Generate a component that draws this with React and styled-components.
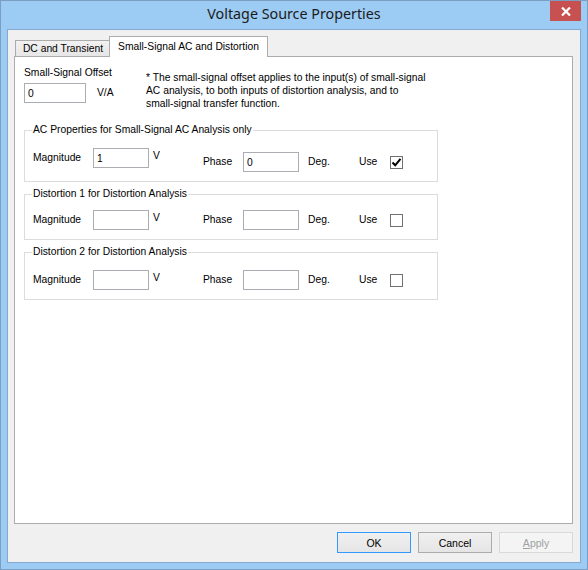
import React from "react";
import styled, { createGlobalStyle } from "styled-components";

const GlobalStyle = createGlobalStyle`
  html, body {
    margin: 0;
    padding: 0;
    background: #ffffff;
  }
  * {
    box-sizing: border-box;
  }
`;

const groups = [
  { title: "AC Properties for Small-Signal AC Analysis only", mag: "1", phase: "0", use: true, padTop: 11, drop: 4 },
  { title: "Distortion 1 for Distortion Analysis", mag: "", phase: "", use: false, padTop: 9, drop: 0 },
  { title: "Distortion 2 for Distortion Analysis", mag: "", phase: "", use: false, padTop: 11, drop: 0 },
];

const App = () => {
  return (
    <>
      <GlobalStyle />
      <Window>
        <TitleBar>
          <span />
          <Title>Voltage Source Properties</Title>
          <CloseButton>
            <svg width="10" height="9" viewBox="0 0 10 9">
              <path d="M1 0.5 L9 8.5 M9 0.5 L1 8.5" stroke="#ffffff" strokeWidth="2.2" />
            </svg>
          </CloseButton>
        </TitleBar>
        <Client>
          <TabStrip>
            <Tab $w={95}>DC and Transient</Tab>
            <Tab $w={159} $active>Small-Signal AC and Distortion</Tab>
          </TabStrip>
          <Panel>
            <TopRow>
              <OffsetBlock>
                <Label>Small-Signal Offset</Label>
                <OffsetLine>
                  <TextBox $w={62} defaultValue="0" />
                  <Unit>V/A</Unit>
                </OffsetLine>
              </OffsetBlock>
              <Note>
                * The small-signal offset applies to the input(s) of small-signal
                <br />
                AC analysis, to both inputs of distortion analysis, and to
                <br />
                small-signal transfer function.
              </Note>
            </TopRow>
            <Groups>
              {groups.map((g) => (
                <GroupBox key={g.title} $padTop={g.padTop}>
                  <Legend>{g.title}</Legend>
                  <Row>
                    <Cell $w={60}>Magnitude</Cell>
                    <TextBox $w={56} defaultValue={g.mag} />
                    <VUnit>V</VUnit>
                    <PhaseSide $drop={g.drop}>
                      <Cell $w={40}>Phase</Cell>
                      <TextBox $w={56} defaultValue={g.phase} />
                      <Cell $w={51} $ml={9}>Deg.</Cell>
                      <Cell $w={31}>Use</Cell>
                      <CheckBox>
                        {g.use && (
                          <svg width="11" height="11" viewBox="0 0 11 11">
                            <path d="M1.5 5.5 L4.2 8.3 L9.5 1.8" fill="none" stroke="#000000" strokeWidth="2" />
                          </svg>
                        )}
                      </CheckBox>
                    </PhaseSide>
                  </Row>
                </GroupBox>
              ))}
            </Groups>
          </Panel>
          <ButtonBar>
            <Button $focused>OK</Button>
            <Button>Cancel</Button>
            <Button disabled>
              <u>A</u>pply
            </Button>
          </ButtonBar>
        </Client>
      </Window>
    </>
  );
};

const Window = styled.div`
  width: 588px;
  height: 570px;
  border: 1px solid #7b9ec2;
  background: #9ccbf3;
  padding: 0 6px 6px 6px;
  display: flex;
  flex-direction: column;
  font-family: "Liberation Sans", Arial, sans-serif;
  font-size: 10.3px;
  color: #000000;
`;

const TitleBar = styled.div`
  height: 28px;
  display: grid;
  grid-template-columns: 1fr auto 1fr;
  align-items: start;
  margin: 0 -6px;
`;

const Title = styled.div`
  font-family: "Noto Sans", "Open Sans", sans-serif;
  font-size: 14.3px;
  line-height: 28px;
  color: #1b1b1b;
  margin-top: -1px;
`;

const CloseButton = styled.div`
  justify-self: end;
  margin-right: 6px;
  width: 31px;
  height: 20px;
  background: #c75050;
  display: flex;
  align-items: center;
  justify-content: center;
`;

const Client = styled.div`
  height: 534px;
  border: 1px solid #83a9cf;
  background: #f0f0f0;
  padding: 7px 7px 8px 6px;
  display: flex;
  flex-direction: column;
`;

const TabStrip = styled.div`
  display: flex;
  align-items: flex-end;
  height: 20px;
  padding-left: 1px;
  margin-bottom: -1px;
`;

const Tab = styled.div`
  position: relative;
  width: ${(p) => p.$w}px;
  height: ${(p) => (p.$active ? "21px" : "17px")};
  margin-left: ${(p) => (p.$active ? "-1px" : "0")};
  border: 1px solid #acacac;
  border-bottom: ${(p) => (p.$active ? "none" : "1px solid #acacac")};
  background: ${(p) => (p.$active ? "#ffffff" : "linear-gradient(#f2f2f2, #e6e6e6)")};
  z-index: ${(p) => (p.$active ? 2 : 1)};
  display: flex;
  align-items: center;
  justify-content: center;
  white-space: nowrap;
  line-height: 13px;
  padding-bottom: ${(p) => (p.$active ? "2px" : "0")};
  padding-left: ${(p) => (p.$active ? "0" : "1px")};
`;

const Panel = styled.div`
  width: 559px;
  height: 468px;
  border: 1px solid #acacac;
  background: #ffffff;
  padding: 9px 9px;
`;

const TopRow = styled.div`
  display: flex;
  align-items: flex-start;
`;

const OffsetBlock = styled.div`
  width: 122px;
  display: flex;
  flex-direction: column;
  gap: 4px;
`;

const Label = styled.div`
  line-height: 13px;
  white-space: nowrap;
`;

const OffsetLine = styled.div`
  display: flex;
  align-items: center;
`;

const Unit = styled.span`
  margin-left: 11px;
  margin-top: -1px;
`;

const Note = styled.div`
  margin-top: 5px;
  line-height: 13px;
  white-space: nowrap;
`;

const TextBox = styled.input`
  width: ${(p) => p.$w}px;
  height: 20px;
  border: 1px solid #abadb3;
  background: #ffffff;
  padding: 0 0 0 3px;
  margin: 0;
  font-family: inherit;
  font-size: inherit;
  color: #000000;
  outline: none;
`;

const Groups = styled.div`
  margin-top: 13px;
  display: flex;
  flex-direction: column;
  gap: 5px;
`;

const GroupBox = styled.fieldset`
  width: 414px;
  margin: 0;
  border: 1px solid #dcdcdc;
  padding: ${(p) => p.$padTop}px 8px 9px 8px;
  min-width: 0;
`;

const Legend = styled.legend`
  padding: 0 1px;
  margin-left: -1px;
  line-height: 14px;
`;

const Row = styled.div`
  display: flex;
  align-items: flex-start;
`;

const Cell = styled.div`
  width: ${(p) => p.$w}px;
  margin-left: ${(p) => p.$ml || 0}px;
  height: 20px;
  line-height: 20px;
  white-space: nowrap;
  flex-shrink: 0;
`;

const VUnit = styled.div`
  width: 50px;
  margin-left: 4px;
  line-height: 16px;
`;

const PhaseSide = styled.div`
  display: flex;
  align-items: center;
  margin-top: ${(p) => p.$drop}px;
`;

const CheckBox = styled.div`
  width: 13px;
  height: 13px;
  border: 1px solid #707070;
  background: #ffffff;
  display: flex;
  align-items: center;
  justify-content: center;
`;

const ButtonBar = styled.div`
  margin-top: 8px;
  display: flex;
  justify-content: flex-end;
  gap: 7px;
`;

const Button = styled.button`
  width: 74px;
  height: 21px;
  margin: 0;
  padding: 0;
  font-family: "Liberation Sans", Arial, sans-serif;
  font-size: 10.5px;
  color: #000000;
  border: 1px solid ${(p) => (p.$focused ? "#3399ff" : "#acacac")};
  background: linear-gradient(#f0f0f0, #e5e5e5);

  &:disabled {
    color: #a0a0a0;
    border-color: #d9d9d9;
    background: #f4f4f4;
  }
`;

export default App;
